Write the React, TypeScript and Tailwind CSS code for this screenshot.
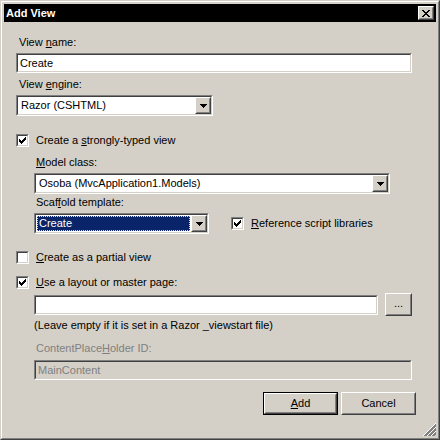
import React from "react";

const Sunken = ({
  className = "",
  inner = "",
  children,
}: {
  className?: string;
  inner?: string;
  children?: React.ReactNode;
}) => (
  <div
    className={`border border-t-[#808080] border-l-[#808080] border-b-white border-r-white ${className}`}
  >
    <div
      className={`h-full border border-t-[#404040] border-l-[#404040] border-b-[#d4d0c8] border-r-[#d4d0c8] ${inner}`}
    >
      {children}
    </div>
  </div>
);

const Raised = ({
  className = "",
  inner = "",
  children,
}: {
  className?: string;
  inner?: string;
  children?: React.ReactNode;
}) => (
  <div
    className={`border border-t-white border-l-white border-b-[#404040] border-r-[#404040] bg-[#d4d0c8] ${className}`}
  >
    <div
      className={`h-full border border-t-[#d4d0c8] border-l-[#d4d0c8] border-b-[#808080] border-r-[#808080] ${inner}`}
    >
      {children}
    </div>
  </div>
);

const Arrow = () => (
  <svg width="7" height="4" viewBox="0 0 7 4" shapeRendering="crispEdges">
    <rect x="0" y="0" width="7" height="1" fill="#000" />
    <rect x="1" y="1" width="5" height="1" fill="#000" />
    <rect x="2" y="2" width="3" height="1" fill="#000" />
    <rect x="3" y="3" width="1" height="1" fill="#000" />
  </svg>
);

const Combo = ({
  width,
  text,
  selected = false,
}: {
  width: string;
  text: string;
  selected?: boolean;
}) => (
  <Sunken className={`h-[21px] ${width}`} inner="bg-white flex">
    <div className="flex-1 flex items-stretch min-w-0">
      {selected ? (
        <div className="flex-1 m-[1px] bg-[#0a246a] text-white border border-dotted border-[#f5db95] pl-[1px] leading-[13px] flex items-center">
          {text}
        </div>
      ) : (
        <div className="flex-1 pl-[3px] flex items-center leading-[13px]">{text}</div>
      )}
    </div>
    <Raised
      className="w-[16px] h-[17px] shrink-0"
      inner="flex items-center justify-center"
    >
      <Arrow />
    </Raised>
  </Sunken>
);

const Check = () => (
  <svg width="7" height="7" viewBox="0 0 7 7" shapeRendering="crispEdges">
    <rect x="6" y="0" width="1" height="1" fill="#000" />
    <rect x="5" y="1" width="2" height="1" fill="#000" />
    <rect x="0" y="2" width="1" height="1" fill="#000" />
    <rect x="4" y="2" width="3" height="1" fill="#000" />
    <rect x="0" y="3" width="2" height="1" fill="#000" />
    <rect x="3" y="3" width="3" height="1" fill="#000" />
    <rect x="0" y="4" width="5" height="1" fill="#000" />
    <rect x="1" y="5" width="3" height="1" fill="#000" />
    <rect x="2" y="6" width="1" height="1" fill="#000" />
  </svg>
);

const CheckBox = ({ checked }: { checked: boolean }) => (
  <Sunken
    className="w-[13px] h-[13px] shrink-0"
    inner="bg-white flex items-center justify-center"
  >
    {checked ? <Check /> : null}
  </Sunken>
);

const CloseX = () => (
  <svg width="8" height="7" viewBox="0 0 8 7" shapeRendering="crispEdges">
    <rect x="0" y="0" width="2" height="1" fill="#000" />
    <rect x="6" y="0" width="2" height="1" fill="#000" />
    <rect x="1" y="1" width="2" height="1" fill="#000" />
    <rect x="5" y="1" width="2" height="1" fill="#000" />
    <rect x="2" y="2" width="4" height="1" fill="#000" />
    <rect x="3" y="3" width="2" height="1" fill="#000" />
    <rect x="2" y="4" width="4" height="1" fill="#000" />
    <rect x="1" y="5" width="2" height="1" fill="#000" />
    <rect x="5" y="5" width="2" height="1" fill="#000" />
    <rect x="0" y="6" width="2" height="1" fill="#000" />
    <rect x="6" y="6" width="2" height="1" fill="#000" />
  </svg>
);

const Grip = () => (
  <svg width="13" height="13" viewBox="0 0 13 13" shapeRendering="crispEdges">
    {[0, 4, 8].map((o) => (
      <g key={o}>
        <line x1={o + 0.5} y1="13" x2="13" y2={o + 0.5} stroke="#ffffff" strokeWidth="1" />
        <line x1={o + 1.5} y1="13" x2="13" y2={o + 1.5} stroke="#808080" strokeWidth="1" />
        <line x1={o + 2.5} y1="13" x2="13" y2={o + 2.5} stroke="#808080" strokeWidth="1" />
      </g>
    ))}
  </svg>
);

export default function App() {
  return (
    <div className="w-[440px] h-[440px] bg-[#d4d0c8] relative font-['Liberation_Sans',Arial,sans-serif] text-[11px] leading-[13px] text-black select-none">
      <div className="h-full border border-t-[#d4d0c8] border-l-[#d4d0c8] border-b-[#404040] border-r-[#404040]">
        <div className="h-full border border-t-white border-l-white border-b-[#808080] border-r-[#808080] p-[2px]">
          {/* Title bar */}
          <div className="h-[18px] bg-black flex items-center justify-between pl-[2px] pr-[2px]">
            <span className="text-white font-bold text-[11px]">Add View</span>
            <Raised className="w-[16px] h-[14px]" inner="flex items-center justify-center">
              <CloseX />
            </Raised>
          </div>

          {/* Content */}
          <div className="flex flex-col pl-[12px]">
            <div className="mt-[14px] pl-[3px] h-[13px]">
              View <span className="underline">n</span>ame:
            </div>
            <Sunken className="mt-[4px] w-[396px] h-[20px]" inner="bg-white flex items-center pl-[2px]">
              Create
            </Sunken>

            <div className="mt-[5px] pl-[3px] h-[13px]">
              View <span className="underline">e</span>ngine:
            </div>
            <div className="mt-[4px]">
              <Combo width="w-[197px]" text="Razor (CSHTML)" />
            </div>

            <div className="mt-[18px] h-[13px] flex items-center gap-[7px]">
              <CheckBox checked />
              <span>
                Create a <span className="underline">s</span>trongly-typed view
              </span>
            </div>

            <div className="ml-[18px] flex flex-col">
              <div className="mt-[9px] pl-[2px] h-[13px]">
                <span className="underline">M</span>odel class:
              </div>
              <div className="mt-[4px]">
                <Combo width="w-[356px]" text="Osoba (MvcApplication1.Models)" />
              </div>
              <div className="mt-[2px] pl-[2px] h-[13px]">
                Scaf<span className="underline">f</span>old template:
              </div>
              <div className="mt-[4px] flex items-center">
                <Combo width="w-[175px]" text="Create" selected />
                <div className="ml-[22px] flex items-center gap-[7px] h-[13px]">
                  <CheckBox checked />
                  <span>
                    <span className="underline">R</span>eference script libraries
                  </span>
                </div>
              </div>
            </div>

            <div className="mt-[17px] h-[13px] flex items-center gap-[7px]">
              <CheckBox checked={false} />
              <span>
                <span className="underline">C</span>reate as a partial view
              </span>
            </div>

            <div className="mt-[12px] h-[13px] flex items-center gap-[7px]">
              <CheckBox checked />
              <span>
                <span className="underline">U</span>se a layout or master page:
              </span>
            </div>

            <div className="ml-[18px] flex flex-col">
              <div className="mt-[4px] h-[23px] flex items-center gap-[7px]">
                <Sunken className="w-[344px] h-[20px]" inner="bg-white" />
                <Raised className="w-[27px] h-[23px]" inner="flex items-center justify-center pb-[2px]">
                  ...
                </Raised>
              </div>
              <div className="mt-[3px] h-[13px]">
                (Leave empty if it is set in a Razor _viewstart file)
              </div>
              <div className="mt-[10px] pl-[2px] h-[13px] text-[#808080]">
                ContentPlace<span className="underline">H</span>older ID:
              </div>
              <Sunken
                className="mt-[5px] w-[378px] h-[20px]"
                inner="bg-[#d4d0c8] flex items-center pl-[2px] text-[#808080]"
              >
                MainContent
              </Sunken>
            </div>

            <div className="mt-[12px] flex justify-end gap-[3px] pr-[20px]">
              <div className="w-[75px] h-[23px] border border-black">
                <Raised className="h-full" inner="flex items-center justify-center">
                  <span>
                    <span className="underline">A</span>dd
                  </span>
                </Raised>
              </div>
              <Raised className="w-[75px] h-[23px]" inner="flex items-center justify-center">
                Cancel
              </Raised>
            </div>
          </div>
        </div>
      </div>
      <div className="absolute right-[4px] bottom-[4px]">
        <Grip />
      </div>
    </div>
  );
}
